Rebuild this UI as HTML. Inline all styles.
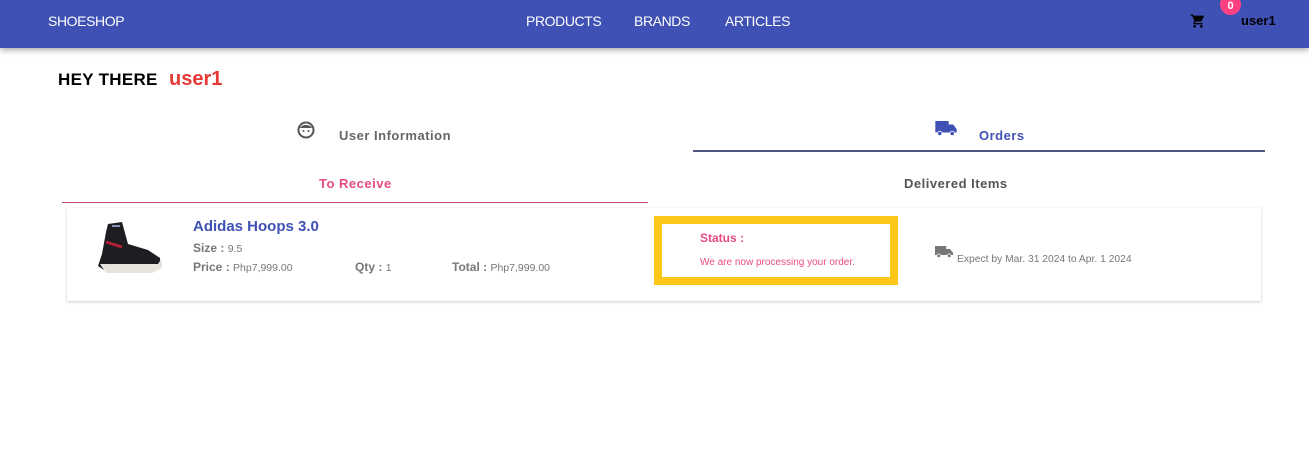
<!DOCTYPE html>
<html><head><style>
body{margin:0;width:1309px;height:467px;background:#fff;font-family:"Liberation Sans",sans-serif;position:relative;overflow:hidden}
.nav{position:absolute;left:0;top:0;width:1309px;height:48px;background:#3f51b5;box-shadow:0 2px 6px rgba(0,0,0,.35)}
.t{position:absolute;white-space:nowrap}
</style></head><body>
<div class="nav">
<div class="t" style="left:48px;top:13px;color:#fff;font-size:14px;letter-spacing:-.4px">SHOESHOP</div>
<div class="t" style="left:526px;top:13px;color:#fff;font-size:14px;letter-spacing:-.4px">PRODUCTS</div>
<div class="t" style="left:634px;top:13px;color:#fff;font-size:14px;letter-spacing:-.4px">BRANDS</div>
<div class="t" style="left:725px;top:13px;color:#fff;font-size:14px;letter-spacing:-.4px">ARTICLES</div>
<svg class="t" style="left:1190px;top:13px" width="16" height="16" viewBox="0 0 24 24"><path fill="#000" d="M7 18c-1.1 0-2 .9-2 2s.9 2 2 2 2-.9 2-2-.9-2-2-2zM1 2v2h2l3.6 7.6-1.4 2.4c-.1.3-.2.6-.2 1 0 1.1.9 2 2 2h12v-2H7.4c-.1 0-.2-.1-.2-.2v-.1l.9-1.7h7.4c.8 0 1.4-.4 1.7-1l3.6-6.5c.1-.2.1-.3.1-.5 0-.6-.4-1-1-1H5.2l-.9-2H1zm16 16c-1.1 0-2 .9-2 2s.9 2 2 2 2-.9 2-2-.9-2-2-2z"/></svg>
<div class="t" style="left:1220px;top:-6px;width:21px;height:21px;border-radius:50%;background:#ff4081;color:#fff;font-size:11px;font-weight:bold;text-align:center;line-height:24px">0</div>
<div class="t" style="left:1241px;top:13px;color:#000;font-size:13px;font-weight:bold">user1</div>
</div>
<div class="t" style="left:58px;top:70px;font-size:17px;font-weight:bold;color:#000;letter-spacing:.3px">HEY THERE</div>
<div class="t" style="left:169px;top:68px;font-size:20px;font-weight:bold;color:#e53935">user1</div>
<svg class="t" style="left:297px;top:121px" width="18" height="18" viewBox="0 0 18 18"><circle cx="9" cy="9" r="7.5" fill="none" stroke="#555" stroke-width="2"/><path d="M3 7c2-4 10-4 12 0z" fill="#555"/><circle cx="6.5" cy="10" r="1" fill="#555"/><circle cx="11.5" cy="10" r="1" fill="#555"/></svg>
<div class="t" style="left:339px;top:128px;font-size:13px;font-weight:bold;color:#666;letter-spacing:.5px">User Information</div>
<svg class="t" style="left:935px;top:121px" width="22" height="16" viewBox="0 0 24 18"><path fill="#3f51b5" d="M0 0h15v13H0zM15 4h5l4 5v4h-9z"/><circle cx="5" cy="14" r="2.5" fill="#3f51b5" stroke="#fff"/><circle cx="19" cy="14" r="2.5" fill="#3f51b5" stroke="#fff"/></svg>
<div class="t" style="left:979px;top:128px;font-size:13px;font-weight:bold;color:#3f51b5;letter-spacing:.5px">Orders</div>
<div class="t" style="left:693px;top:150px;width:572px;height:2px;background:#4a5580"></div>
<div class="t" style="left:319px;top:176px;font-size:13px;font-weight:bold;color:#e84a86;letter-spacing:.5px">To Receive</div>
<div class="t" style="left:904px;top:176px;font-size:13px;font-weight:bold;color:#555;letter-spacing:.5px">Delivered Items</div>
<div class="t" style="left:62px;top:202px;width:586px;height:1px;background:#c2497a"></div>
<div class="t" style="left:67px;top:208px;width:1194px;height:93px;background:#fff;box-shadow:0 1px 3px rgba(0,0,0,.2)"></div>
<svg class="t" style="left:96px;top:220px" width="70" height="60" viewBox="0 0 70 60"><path d="M12 4l14-2 6 22 20 6 12 8v8l-10 4-46 0-6-4 4-12 4-22z" fill="#1e1e22"/><path d="M4 44l58 0 4-6v10l-10 5-46 0z" fill="#e8e4dc"/><path d="M10 22l16 5" stroke="#b3203a" stroke-width="3"/><path d="M16 6l8 0" stroke="#8890b0" stroke-width="2"/></svg>
<div class="t" style="left:193px;top:218px;font-size:15px;font-weight:bold;color:#3f51b5">Adidas Hoops 3.0</div>
<div class="t" style="left:193px;top:241px;font-size:12px;color:#777"><b>Size :</b> <span style="font-size:10.5px">9.5</span></div>
<div class="t" style="left:193px;top:260px;font-size:12px;color:#777"><b>Price :</b> <span style="font-size:10.5px">Php7,999.00</span></div>
<div class="t" style="left:355px;top:260px;font-size:12px;color:#777"><b>Qty :</b> <span style="font-size:10.5px">1</span></div>
<div class="t" style="left:452px;top:260px;font-size:12px;color:#777"><b>Total :</b> <span style="font-size:10.5px">Php7,999.00</span></div>
<div class="t" style="left:654px;top:216px;width:228px;height:53px;border:8px solid #fcc719;background:#fff"></div>
<div class="t" style="left:700px;top:231px;font-size:12px;font-weight:bold;color:#e84a86">Status :</div>
<div class="t" style="left:700px;top:257px;font-size:10px;color:#e84a86">We are now processing your order.</div>
<svg class="t" style="left:935px;top:246px" width="18" height="12" viewBox="0 0 24 16"><path fill="#777" d="M0 0h15v12H0zM15 4h5l4 5v3h-9z"/><circle cx="5" cy="13" r="2.5" fill="#777" stroke="#fff"/><circle cx="19" cy="13" r="2.5" fill="#777" stroke="#fff"/></svg>
<div class="t" style="left:957px;top:254px;font-size:10.3px;color:#777">Expect by Mar. 31 2024 to Apr. 1 2024</div>
</body></html>
